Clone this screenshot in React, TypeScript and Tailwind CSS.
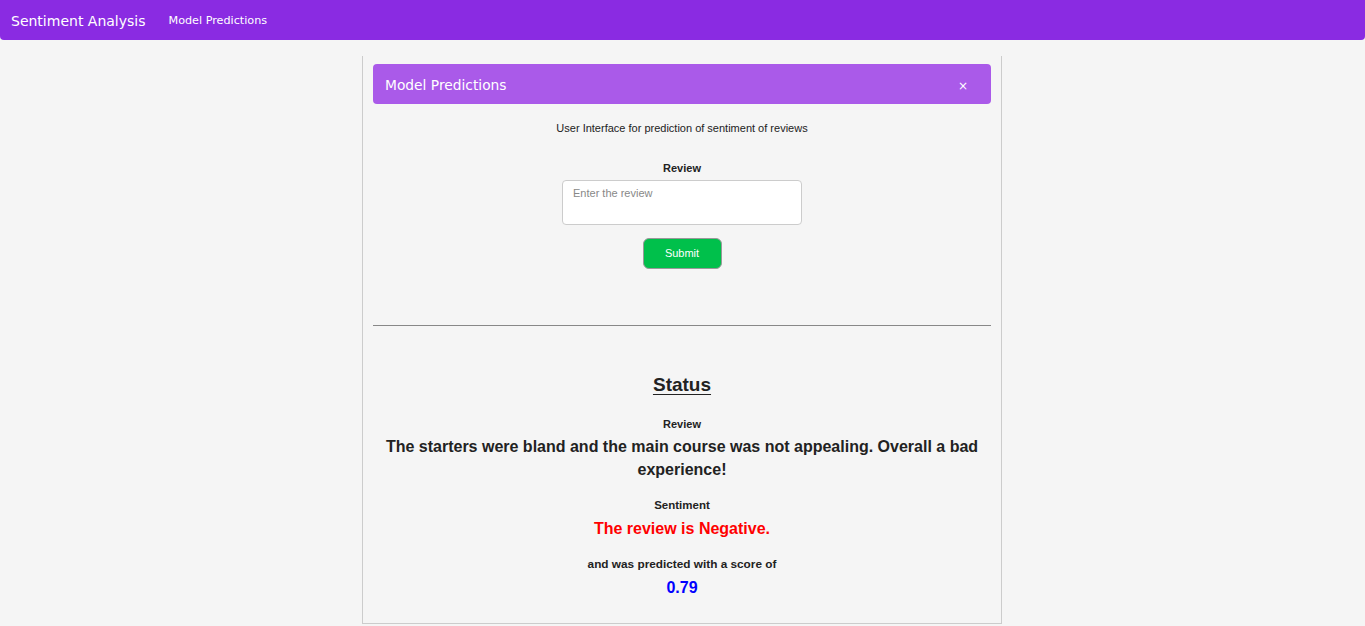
import React from "react";

export default function App() {
  return (
    <div className="min-h-[626px] bg-[#f5f5f5] text-[#222]" style={{ fontFamily: '"Liberation Sans", Arial, sans-serif' }}>
      <nav
        className="h-[40px] bg-[#8a2be2] rounded-b-[4px] flex items-center px-[11px] pt-[2px] text-white"
        style={{ fontFamily: '"DejaVu Sans", Verdana, sans-serif' }}
      >
        <span className="text-[14px] leading-none">Sentiment Analysis</span>
        <span className="text-[11.2px] leading-none ml-[23px]">Model Predictions</span>
      </nav>
      <div className="flex justify-center pr-[1px]">
        <div className="mt-[16px] w-[640px] border-x border-b border-[#ccc] px-[10px] pt-[8px] pb-[24px]">
          <div
            className="h-[40px] bg-[#aa5ae9] rounded-[4px] flex items-center justify-between pl-[12px] pr-[23px] pt-[3px] text-white"
            style={{ fontFamily: '"DejaVu Sans", Verdana, sans-serif' }}
          >
            <span className="text-[13.8px] leading-none">Model Predictions</span>
            <span className="text-[12px] leading-none">×</span>
          </div>
          <p className="mt-[18px] text-center text-[11px] leading-[13px]">User Interface for prediction of sentiment of reviews</p>
          <div className="mt-[27px] flex flex-col items-center">
            <label className="text-[11px] leading-[13px] font-bold">Review</label>
            <textarea
              placeholder="Enter the review"
              className="mt-[5px] w-[240px] h-[45px] bg-white border border-[#ccc] rounded-[4px] px-[10px] py-[6px] text-[11px] leading-[13px] placeholder:text-[#888] resize-none outline-none"
            />
            <button className="mt-[13px] w-[79px] h-[31px] bg-[#00c04b] border border-[#999] rounded-[6px] text-white text-[11px]">
              Submit
            </button>
          </div>
          <hr className="mt-[56px] border-0 border-t border-[#888]" />
          <div className="text-center">
            <h2 className="mt-[47px] text-[19px] leading-[23px] font-bold underline underline-offset-[3px]">Status</h2>
            <div className="mt-[22px] text-[11px] leading-[13px] font-bold">Review</div>
            <div className="mt-[4px] text-[16px] leading-[23px] font-bold px-[4px]">
              The starters were bland and the main course was not appealing. Overall a bad experience!
            </div>
            <div className="mt-[18px] text-[11.5px] leading-[13px] font-bold">Sentiment</div>
            <div className="mt-[5px] text-[16px] leading-[23px] font-bold text-[#ff0000]">The review is Negative.</div>
            <div className="mt-[18px] text-[11.8px] leading-[13px] font-bold">and was predicted with a score of</div>
            <div className="mt-[5px] text-[16px] leading-[23px] font-bold text-[#0000ff]">0.79</div>
          </div>
        </div>
      </div>
    </div>
  );
}
